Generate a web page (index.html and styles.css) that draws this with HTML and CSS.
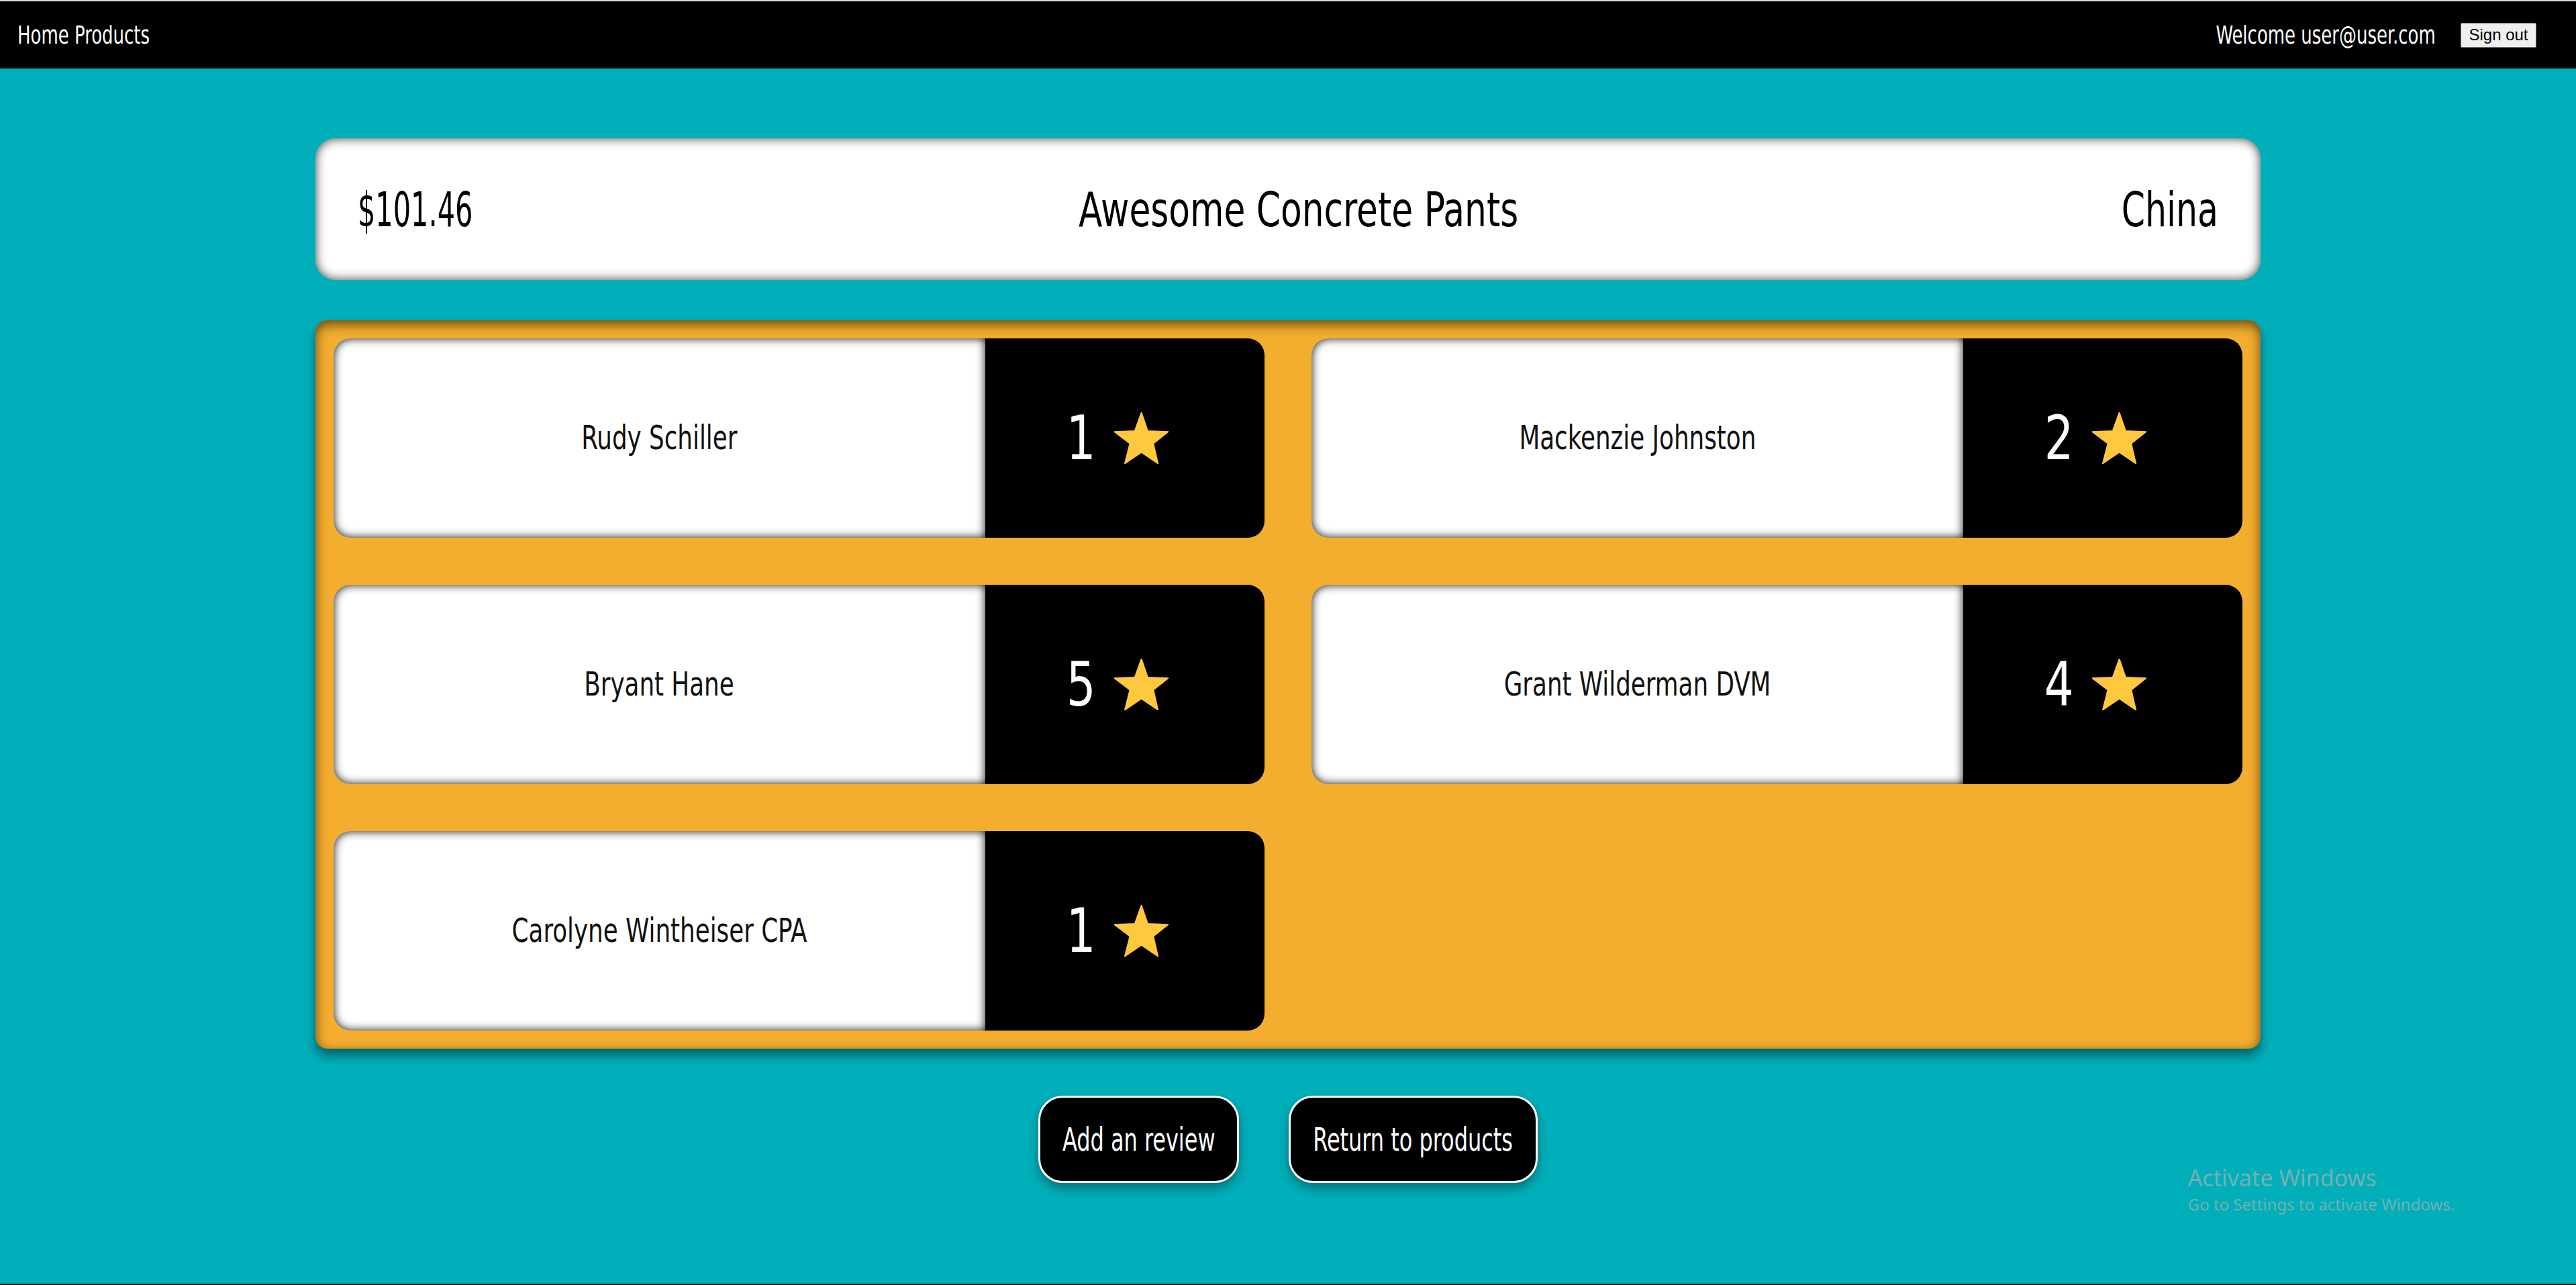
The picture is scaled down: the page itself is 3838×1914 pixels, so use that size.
FILE: index.html
```html
<!DOCTYPE html>
<html lang="en">
<head>
<meta charset="utf-8">
<title>Product reviews</title>
<link rel="stylesheet" href="styles.css">
</head>
<body>
<nav class="topbar">
  <div class="brand"><span class="sq sq-left sq-nav">Home Products</span></div>
  <div class="user">
    <span class="welcome"><span class="sq sq-right sq-nav">Welcome user@user.com</span></span>
    <button class="signout" type="button">Sign out</button>
  </div>
</nav>

<main class="page">
  <section class="product">
    <span class="price"><span class="sq sq-left sq-price">$101.46</span></span>
    <span class="title"><span class="sq sq-title">Awesome Concrete Pants</span></span>
    <span class="origin"><span class="sq sq-right sq-origin">China</span></span>
  </section>

  <section class="reviews">
    <article class="review">
      <div class="author"><span class="sq sq-name">Rudy Schiller</span></div>
      <div class="rating"><span class="score">1</span><svg class="star" viewBox="0 0 81 77"><polygon points="40.6,0 50.1,27.7 80.7,29 58.6,46.7 65.4,76.7 40.6,60 15.7,76.7 23.3,46.7 0,29 30.6,27.7"/></svg></div>
    </article>
    <article class="review">
      <div class="author"><span class="sq sq-name">Mackenzie Johnston</span></div>
      <div class="rating"><span class="score">2</span><svg class="star" viewBox="0 0 81 77"><polygon points="40.6,0 50.1,27.7 80.7,29 58.6,46.7 65.4,76.7 40.6,60 15.7,76.7 23.3,46.7 0,29 30.6,27.7"/></svg></div>
    </article>
    <article class="review">
      <div class="author"><span class="sq sq-name">Bryant Hane</span></div>
      <div class="rating"><span class="score">5</span><svg class="star" viewBox="0 0 81 77"><polygon points="40.6,0 50.1,27.7 80.7,29 58.6,46.7 65.4,76.7 40.6,60 15.7,76.7 23.3,46.7 0,29 30.6,27.7"/></svg></div>
    </article>
    <article class="review">
      <div class="author"><span class="sq sq-name">Grant Wilderman DVM</span></div>
      <div class="rating"><span class="score">4</span><svg class="star" viewBox="0 0 81 77"><polygon points="40.6,0 50.1,27.7 80.7,29 58.6,46.7 65.4,76.7 40.6,60 15.7,76.7 23.3,46.7 0,29 30.6,27.7"/></svg></div>
    </article>
    <article class="review">
      <div class="author"><span class="sq sq-name">Carolyne Wintheiser CPA</span></div>
      <div class="rating"><span class="score">1</span><svg class="star" viewBox="0 0 81 77"><polygon points="40.6,0 50.1,27.7 80.7,29 58.6,46.7 65.4,76.7 40.6,60 15.7,76.7 23.3,46.7 0,29 30.6,27.7"/></svg></div>
    </article>
  </section>

  <div class="actions">
    <button class="action action-add" type="button"><span class="sq sq-btn">Add an review</span></button>
    <button class="action action-return" type="button"><span class="sq sq-btn">Return to products</span></button>
  </div>
</main>

<div class="watermark">
  <div class="wm-title">Activate Windows</div>
  <div class="wm-sub">Go to Settings to activate Windows.</div>
</div>
</body>
</html>
```

FILE: styles.css
```css
html, body {
  margin: 0;
  padding: 0;
}

body {
  min-height: 1914px;
  box-sizing: border-box;
  background: #00afba;
  border-top: 2px solid #dcdcdc;
  border-bottom: 2px solid #1b1b1b;
  font-family: "Liberation Sans Narrow", "DejaVu Sans Condensed", "Liberation Sans", sans-serif;
  font-stretch: condensed;
  color: #000;
}

/* narrow display face emulation */
.sq {
  display: inline-block;
  white-space: nowrap;
  transform-origin: center center;
}
.sq-left { transform-origin: left center; }
.sq-right { transform-origin: right center; }
.sq-nav { transform: scaleX(0.76); }
.sq-price { transform: scaleX(0.64); }
.sq-title { transform: scaleX(0.80); }
.sq-origin { transform: scaleX(0.78); }
.sq-name { transform: scaleX(0.81); }
.sq-btn { transform: scaleX(0.74); }

.topbar {
  height: 100px;
  background: #000;
  color: #fff;
  display: flex;
  align-items: center;
  justify-content: space-between;
  padding: 0 59px 0 26px;
}

.brand {
  font-size: 38px;
}

.user {
  display: flex;
  align-items: center;
  gap: 37px;
}

.welcome {
  font-size: 38px;
}

.signout {
  font-family: "Liberation Sans", Arial, sans-serif;
  font-stretch: normal;
  font-size: 24px;
  width: 113px;
  height: 37px;
  padding: 0;
  background: #efefef;
  color: #000;
  border: 1px solid #767676;
  border-radius: 2px;
}

.page {
  width: 2898px;
  margin: 104px auto 0;
}

.product {
  height: 211px;
  box-sizing: border-box;
  background: #fff;
  border-radius: 30px;
  box-shadow: inset 0 0 16px rgba(0, 0, 0, 0.75);
  display: grid;
  grid-template-columns: 1fr auto 1fr;
  align-items: center;
  padding: 0 63px;
  font-size: 72px;
}

.price { justify-self: start; }
.title { justify-self: center; padding-left: 32px; }
.origin { justify-self: end; }

.reviews {
  margin-top: 60px;
  background: #f4ae2f;
  border-radius: 18px;
  padding: 27px;
  display: grid;
  grid-template-columns: 1fr 1fr;
  column-gap: 70px;
  row-gap: 70px;
  box-shadow: inset 0 6px 18px rgba(0, 0, 0, 0.6), 0 10px 16px rgba(0, 0, 0, 0.45);
}

.review {
  height: 297px;
  display: flex;
  border-radius: 25px;
  overflow: hidden;
}

.author {
  flex: 0 0 70%;
  background: #fff;
  border-radius: 25px 0 0 25px;
  box-shadow: inset 0 0 14px rgba(0, 0, 0, 0.95);
  display: flex;
  align-items: center;
  justify-content: center;
  font-size: 49px;
  color: #111;
}

.rating {
  flex: 1;
  background: #000;
  color: #fff;
  display: flex;
  align-items: center;
  justify-content: center;
  gap: 24px;
  padding-right: 26px;
}

.score {
  font-size: 90px;
  line-height: 1;
  display: inline-block;
  transform: scaleX(0.85);
}

.star {
  width: 81px;
  height: 77px;
  fill: #ffc83d;
  stroke: #ffc83d;
  stroke-width: 1.5;
  stroke-linejoin: round;
}

.actions {
  margin-top: 70px;
  display: flex;
  justify-content: center;
  gap: 74px;
}

.action {
  height: 130px;
  padding: 0;
  background: #000;
  color: #fff;
  border: 3px solid #fff;
  border-radius: 36px;
  font-family: inherit;
  font-stretch: condensed;
  font-size: 48px;
  box-shadow: 0 8px 16px rgba(0, 0, 0, 0.35);
  display: flex;
  align-items: center;
  justify-content: center;
}

.action-add { width: 299px; }
.action-return { width: 371px; }

.watermark {
  position: fixed;
  left: 3260px;
  top: 1732px;
  color: rgba(160, 175, 178, 0.75);
  font-family: "Noto Sans", "Open Sans", sans-serif;
  font-stretch: normal;
}

.wm-title {
  font-size: 34px;
  line-height: 44px;
}

.wm-sub {
  font-size: 24px;
  line-height: 36px;
}
```
